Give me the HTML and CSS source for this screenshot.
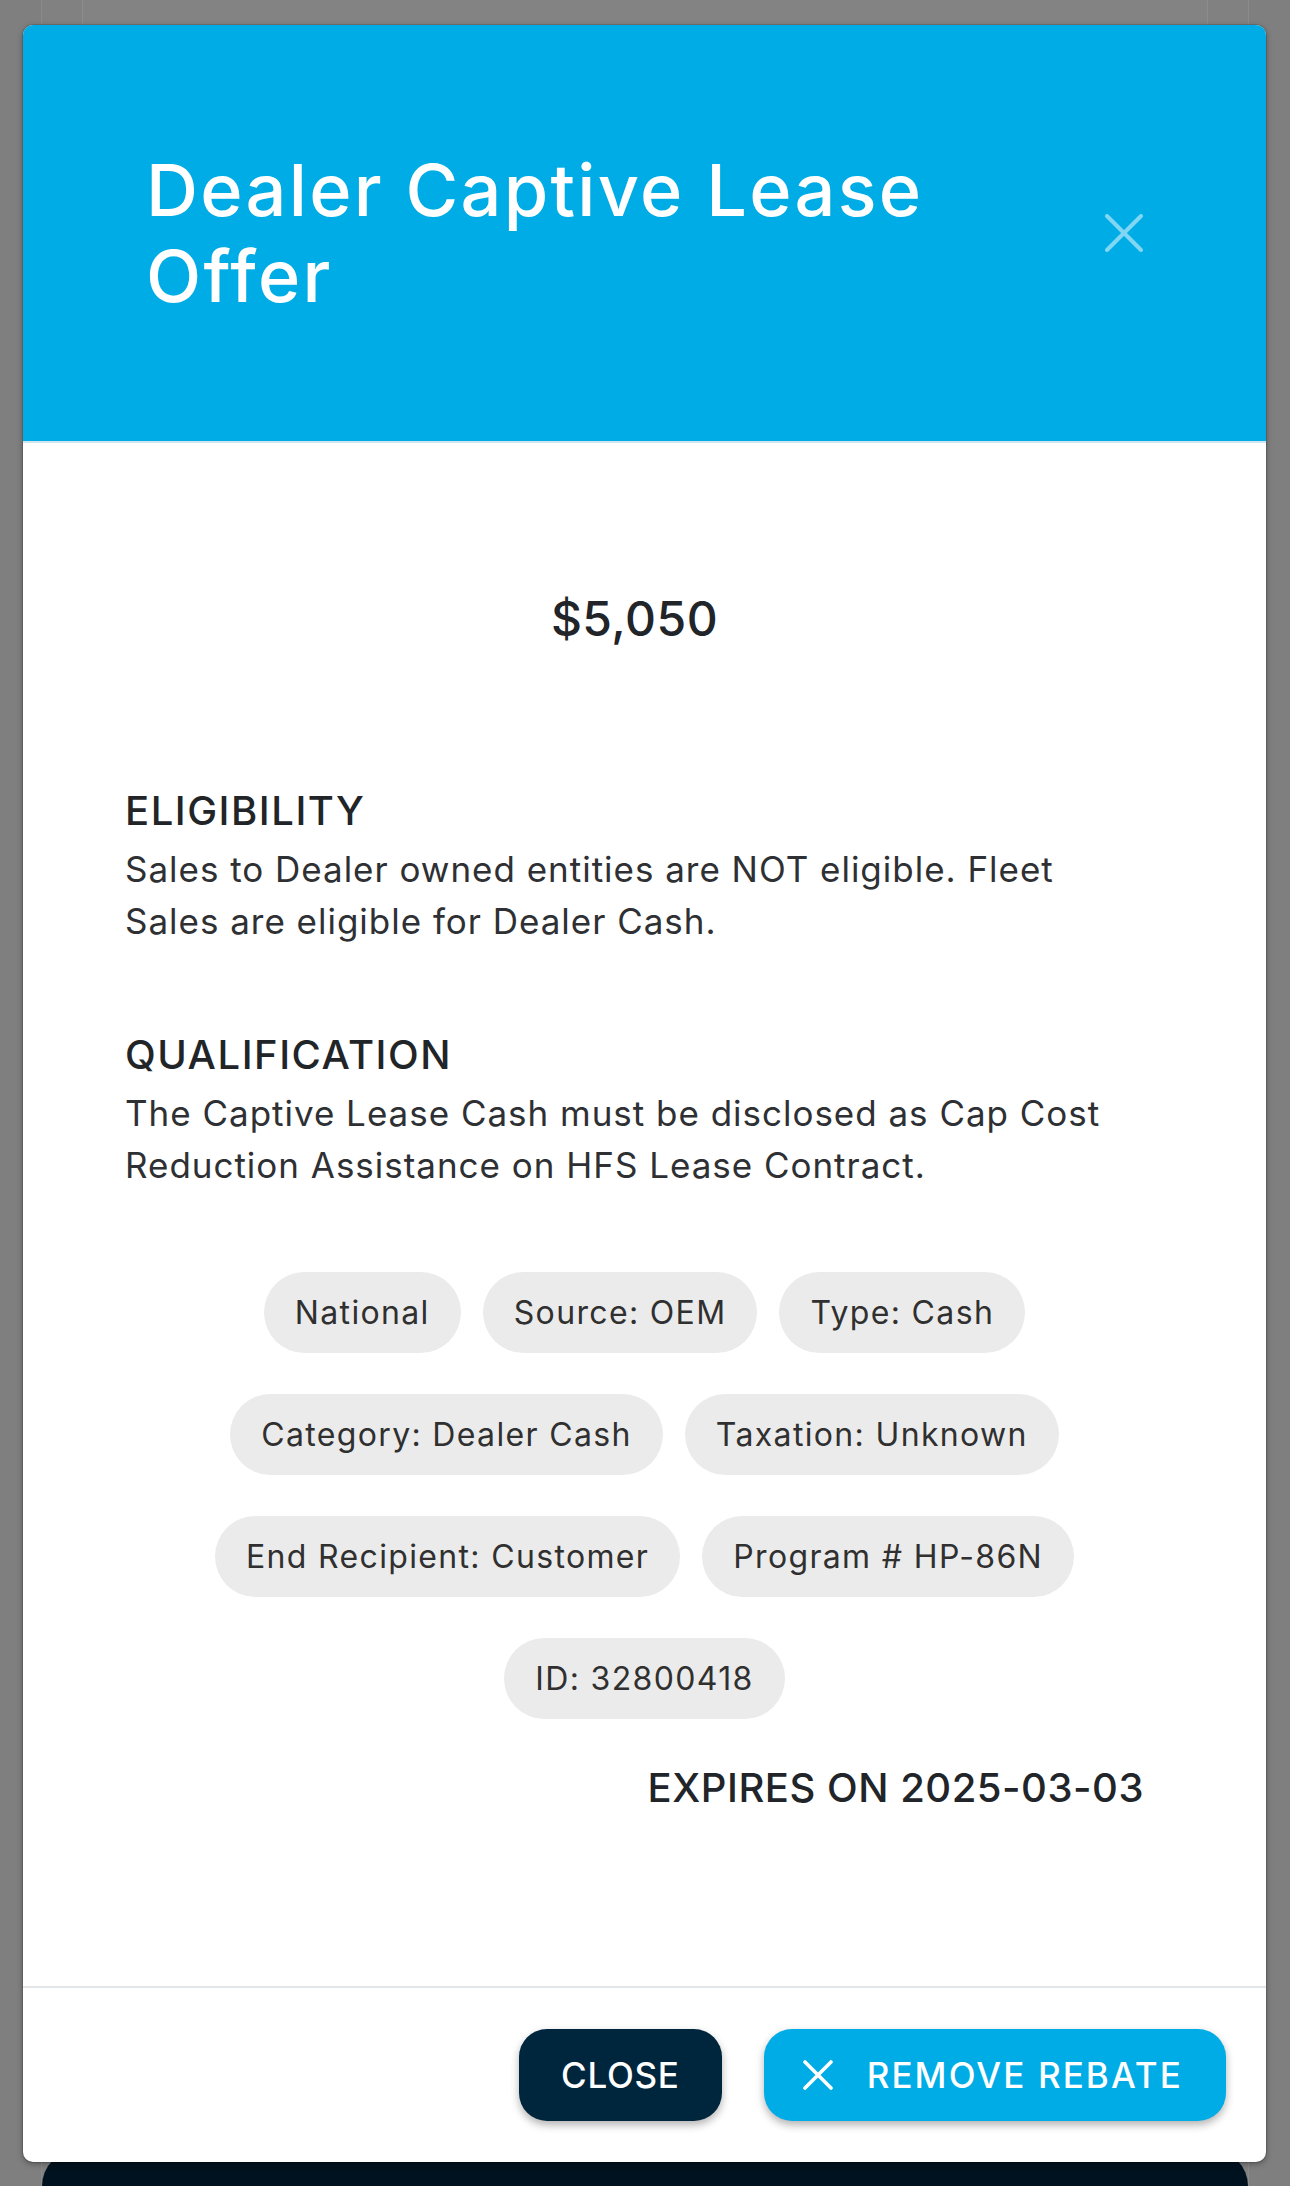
FILE: index.html
```html
<!DOCTYPE html>
<html lang="en">
<head>
<meta charset="utf-8">
<title>Dealer Captive Lease Offer</title>
<link rel="stylesheet" href="styles.css">
</head>
<body>
<div class="under">
  <div class="under-card"></div>
  <div class="under-bar"></div>
</div>
<div class="modal" role="dialog" aria-labelledby="modal-title">
  <header class="modal-header">
    <h1 class="modal-title" id="modal-title">Dealer Captive Lease Offer</h1>
    <button class="icon-close" type="button" aria-label="Close">
      <svg width="38" height="38" viewBox="0 0 38 38" aria-hidden="true">
        <path d="M2 2 L36 36 M36 2 L2 36" stroke="#ffffff" stroke-opacity="0.5" stroke-width="4" stroke-linecap="round" fill="none"/>
      </svg>
    </button>
  </header>
  <div class="modal-body">
    <div class="amount">$5,050</div>
    <section class="info info-first">
      <h2 class="info-title">ELIGIBILITY</h2>
      <p class="info-text">Sales to Dealer owned entities are NOT eligible. Fleet Sales are eligible for Dealer Cash.</p>
    </section>
    <section class="info info-second">
      <h2 class="info-title">QUALIFICATION</h2>
      <p class="info-text">The Captive Lease Cash must be disclosed as Cap Cost Reduction Assistance on HFS Lease Contract.</p>
    </section>
    <ul class="chips">
      <li class="chip">National</li>
      <li class="chip">Source: OEM</li>
      <li class="chip">Type: Cash</li>
      <li class="chip">Category: Dealer Cash</li>
      <li class="chip">Taxation: Unknown</li>
      <li class="chip">End Recipient: Customer</li>
      <li class="chip">Program # HP-86N</li>
      <li class="chip">ID: 32800418</li>
    </ul>
    <div class="expires">EXPIRES ON 2025-03-03</div>
  </div>
  <footer class="modal-footer">
    <button class="btn btn-dark" type="button">CLOSE</button>
    <button class="btn btn-primary" type="button">
      <svg class="btn-icon" width="30" height="30" viewBox="0 0 30 30" aria-hidden="true">
        <path d="M2 2 L28 28 M28 2 L2 28" stroke="#ffffff" stroke-width="3.6" stroke-linecap="round" fill="none"/>
      </svg>
      <span>REMOVE REBATE</span>
    </button>
  </footer>
</div>
</body>
</html>
```

FILE: styles.css
```css
* { box-sizing: border-box; }

html, body {
  margin: 0;
  padding: 0;
}

body {
  width: 1290px;
  height: 2186px;
  overflow: hidden;
  position: relative;
  background: #7f7f7f;
  font-family: Inter, "Open Sans", "Liberation Sans", sans-serif;
}

/* page underneath the overlay */
.under {
  margin: 0 41px;
  height: 2186px;
  display: flex;
  flex-direction: column;
  background: #818181;
  border-left: 1px solid #8a8a8a;
  border-right: 1px solid #8a8a8a;
}

.under-card {
  flex: 1;
  margin: 0 40px;
  background: #838383;
  border-left: 1px solid #8c8c8c;
  border-right: 1px solid #8c8c8c;
}

.under-bar {
  height: 36px;
  background: #00121f;
  border-radius: 36px 36px 0 0;
}

/* modal */
.modal {
  position: absolute;
  left: 23px;
  top: 25px;
  width: 1243px;
  height: 2137px;
  background: #ffffff;
  border-radius: 10px;
  overflow: hidden;
  display: flex;
  flex-direction: column;
  box-shadow: 0 0 0 1px rgba(0, 0, 0, 0.12), 0 2px 6px rgba(0, 0, 0, 0.35);
}

.modal-header {
  flex: none;
  height: 418px;
  background: #00ace6;
  border-bottom: 2px solid #cde6f0;
  display: flex;
  align-items: center;
  gap: 40px;
  padding: 0 123px;
}

.modal-title {
  flex: 1;
  margin: 0;
  color: #ffffff;
  font-size: 72px;
  line-height: 86px;
  font-weight: 500;
  letter-spacing: 0.032em;
}

.icon-close {
  flex: none;
  width: 38px;
  height: 38px;
  padding: 0;
  border: 0;
  background: none;
  display: block;
}

.icon-close svg { display: block; }

.modal-body {
  flex: 1;
  padding-top: 147px;
  color: #232629;
}

.amount {
  margin: 0 122px 0 102px;
  text-align: center;
  font-size: 48px;
  line-height: 58px;
  font-weight: 500;
  letter-spacing: 0.01em;
  color: #212428;
}

.info {
  margin: 0 122px 0 102px;
}

.info-first { margin-top: 139px; }
.info-second { margin-top: 84px; }

.info-title {
  margin: 0 0 8px;
  font-size: 40px;
  line-height: 48px;
  font-weight: 500;
  letter-spacing: 0.038em;
  color: #222528;
}

.info-text {
  margin: 0;
  font-size: 35px;
  line-height: 52px;
  font-weight: 400;
  letter-spacing: 0.028em;
  color: #2e3033;
}

.chips {
  list-style: none;
  margin: 81px 0 0;
  padding: 0 110px;
  display: flex;
  flex-wrap: wrap;
  justify-content: center;
  column-gap: 22px;
  row-gap: 41px;
}

.chip {
  height: 81px;
  padding: 0 31px;
  border-radius: 41px;
  background: #ebebeb;
  font-size: 32px;
  line-height: 81px;
  letter-spacing: 0.042em;
  color: #303030;
  white-space: nowrap;
}

.expires {
  margin: 45px 122px 0 0;
  text-align: right;
  font-size: 40px;
  line-height: 48px;
  font-weight: 500;
  letter-spacing: 0.013em;
  color: #212428;
}

.modal-footer {
  flex: none;
  border-top: 2px solid #e4e7ea;
  padding: 41px 40px;
  display: flex;
  justify-content: flex-end;
  gap: 42px;
}

.btn {
  height: 92px;
  border: 0;
  border-radius: 28px;
  color: #ffffff;
  font-family: inherit;
  font-size: 35px;
  font-weight: 500;
  display: inline-flex;
  align-items: center;
  box-shadow: 0 4px 9px rgba(0, 0, 0, 0.3);
}

.btn-dark {
  background: #00263d;
  padding: 0 42px;
  letter-spacing: 0.02em;
}

.btn-primary {
  background: #00ace6;
  padding: 0 43px 0 39px;
  gap: 34px;
  letter-spacing: 0.06em;
}

.btn-icon { display: block; flex: none; }
```
